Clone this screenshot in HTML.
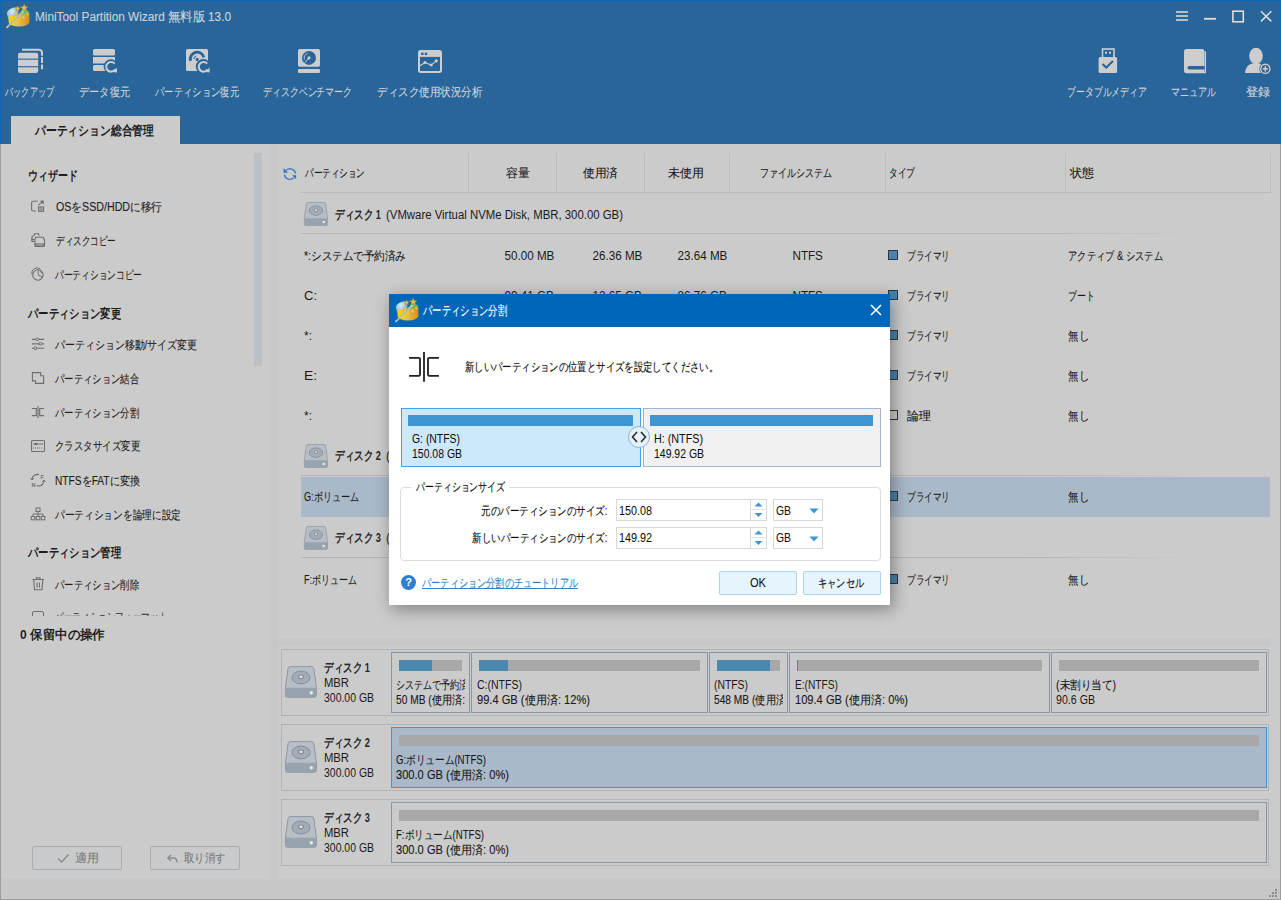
<!DOCTYPE html>
<html><head><meta charset="utf-8">
<style>
*{box-sizing:border-box}
html,body{margin:0;padding:0}
body{width:1281px;height:900px;overflow:hidden;position:relative;background:#cbcbcb;font-family:"Liberation Sans",sans-serif;font-size:12px;color:#262626}
.a{position:absolute}
svg{position:absolute;overflow:visible}

.tx{position:absolute;white-space:nowrap;line-height:20px;height:20px}
.ts{display:inline-block}
</style></head>
<body>
<div class="a" style="left:0px;top:0px;width:1281px;height:144px;background:#28659a;"></div>
<div class="a" style="left:0px;top:0px;width:1281px;height:1px;background:#0a67bd;"></div>
<div class="a" style="left:0px;top:0px;width:1px;height:144px;background:#0a67bd;"></div>
<div class="a" style="left:1280px;top:0px;width:1px;height:144px;background:#0a67bd;"></div>
<div class="a" style="left:0px;top:144px;width:1px;height:756px;background:#9c9c9c;"></div>
<div class="a" style="left:1280px;top:144px;width:1px;height:756px;background:#9c9c9c;"></div>
<div class="a" style="left:0px;top:899px;width:1281px;height:1px;background:#9c9c9c;"></div>
<svg style="left:6px;top:4px" width="24" height="24" viewBox="0 0 24 24">
<defs><linearGradient id="gy6" x1="0" x2="1"><stop offset="0" stop-color="#f0d800"/><stop offset="0.45" stop-color="#e4c448"/><stop offset="1" stop-color="#dc8c14"/></linearGradient>
<radialGradient id="gb6" cx="0.45" cy="0.35" r="0.75"><stop offset="0" stop-color="#d8eaf6"/><stop offset="0.55" stop-color="#9cc8e6"/><stop offset="1" stop-color="#1a80cc"/></radialGradient></defs>
<path d="M0.8 9.5 A11 7 0 0 1 12 3 L12.5 11 L2.5 16 Z" fill="url(#gb6)"/>
<path d="M2.6 11.5 L12.5 10.5 L23.4 9.5 V18 A10.4 4.6 0 0 1 2.6 18 Z" fill="url(#gy6)"/>
<path d="M12.5 10.2 L23.4 9.6 A9 4.5 0 0 0 17 5.2 Z" fill="#66c454"/>
<polygon points="18.20,-0.20 19.28,2.41 22.10,2.63 19.95,4.47 20.61,7.22 18.20,5.75 15.79,7.22 16.45,4.47 14.30,2.63 17.12,2.41" fill="#d9bf55" stroke="#9a7a28" stroke-width="0.45"/><polygon points="11.70,1.70 12.47,3.54 14.46,3.70 12.94,5.00 13.40,6.95 11.70,5.90 10.00,6.95 10.46,5.00 8.94,3.70 10.93,3.54" fill="#d9bf55" stroke="#9a7a28" stroke-width="0.45"/><polygon points="10.00,7.90 10.61,9.36 12.19,9.49 10.98,10.52 11.35,12.06 10.00,11.23 8.65,12.06 9.02,10.52 7.81,9.49 9.39,9.36" fill="#e0cc66" stroke="#b09040" stroke-width="0.3"/><polygon points="17.40,10.80 18.09,12.45 19.87,12.60 18.51,13.76 18.93,15.50 17.40,14.57 15.87,15.50 16.29,13.76 14.93,12.60 16.71,12.45" fill="#e6d070" stroke="#b09040" stroke-width="0.3"/><polygon points="21.20,8.30 21.73,9.57 23.10,9.68 22.06,10.58 22.38,11.92 21.20,11.20 20.02,11.92 20.34,10.58 19.30,9.68 20.67,9.57" fill="#e6d070" stroke="#b09040" stroke-width="0.3"/>
<line x1="1" y1="23.4" x2="17" y2="7.6" stroke="#dcdcdc" stroke-width="1.6" stroke-linecap="round"/>
<line x1="1.4" y1="23" x2="16.6" y2="8" stroke="#606060" stroke-width="0.6"/>
</svg>
<svg style="left:17px;top:48px" width="26" height="26" viewBox="0 0 26 26">
<path d="M5 1.7 H22 a3 3 0 0 1 3 3 V21.2" fill="none" stroke="#cdcdcd" stroke-width="2" stroke-dasharray="24.6 1.3 6 1.5 10"/>
<rect x="1" y="4.8" width="20.2" height="20.2" rx="2" fill="#cdcdcd"/>
<rect x="1" y="10.6" width="20.2" height="1.1" fill="#28659a"/>
<rect x="1" y="18.2" width="20.2" height="1.1" fill="#28659a"/>
</svg>
<svg style="left:92px;top:48px" width="26" height="26" viewBox="0 0 26 26">
<rect x="1" y="1" width="22" height="6.6" rx="1.6" fill="#cdcdcd"/>
<rect x="1" y="9" width="22" height="6.5" fill="#cdcdcd"/>
<rect x="1" y="17" width="22" height="6" rx="1.6" fill="#cdcdcd"/>
<circle cx="18.8" cy="18.5" r="7.2" fill="#28659a"/>
<path d="M22.6 15.7 A4.8 4.8 0 1 0 23 21.5" fill="none" stroke="#cdcdcd" stroke-width="2"/>
<path d="M25 19.5 L25 24.5 L20.5 24 Z" fill="#cdcdcd"/>
</svg>
<svg style="left:185px;top:48px" width="26" height="26" viewBox="0 0 26 26">
<rect x="1" y="1" width="22" height="22" rx="1.6" fill="#cdcdcd"/>
<path d="M5.5 12.8 A6.8 6.8 0 0 1 18.9 9.4" fill="none" stroke="#28659a" stroke-width="2.8"/>
<path d="M8.8 11 A3.6 3.6 0 0 1 11 7.9" fill="none" stroke="#28659a" stroke-width="1.1"/>
<circle cx="12.2" cy="11.4" r="1.6" fill="#28659a"/>
<circle cx="18.3" cy="18.5" r="7.5" fill="#28659a"/>
<path d="M22.2 15.7 A4.8 4.8 0 1 0 22.6 21.5" fill="none" stroke="#cdcdcd" stroke-width="2"/>
<path d="M24.6 19.5 L24.6 24.5 L20.1 24 Z" fill="#cdcdcd"/>
</svg>
<svg style="left:298px;top:48px" width="24" height="26" viewBox="0 0 24 26">
<rect x="0" y="1" width="22" height="17.7" rx="1.6" fill="#cdcdcd"/>
<circle cx="11" cy="9.9" r="7" fill="#28659a"/>
<path d="M6.4 11.5 A5 5 0 0 1 9.5 5.25" fill="none" stroke="#cdcdcd" stroke-width="0.9"/>
<circle cx="11" cy="9.9" r="1.6" fill="#cdcdcd"/>
<line x1="11" y1="9.9" x2="7" y2="14.6" stroke="#cdcdcd" stroke-width="1"/>
<rect x="0" y="21" width="22" height="4" rx="1" fill="#cdcdcd"/>
</svg>
<svg style="left:418px;top:49px" width="26" height="24" viewBox="0 0 26 24">
<rect x="1" y="1.9" width="22" height="21" rx="1.6" fill="none" stroke="#cdcdcd" stroke-width="2"/>
<rect x="1" y="1.9" width="22" height="6" fill="#cdcdcd"/>
<rect x="3.2" y="3.6" width="2.4" height="2.4" fill="#28659a"/>
<rect x="6.8" y="3.6" width="2.4" height="2.4" fill="#28659a"/>
<polyline points="2,16.8 7,13.6 13.2,16.1 18.3,11.8" fill="none" stroke="#cdcdcd" stroke-width="1.1"/>
<circle cx="7" cy="13.6" r="1.5" fill="#cdcdcd"/><circle cx="13.2" cy="16.1" r="1.5" fill="#cdcdcd"/><circle cx="18.3" cy="11.8" r="1.6" fill="#cdcdcd"/>
</svg>
<svg style="left:1098px;top:48px" width="20" height="26" viewBox="0 0 20 26">
<rect x="4.5" y="1" width="11.5" height="9" fill="none" stroke="#cdcdcd" stroke-width="1.6"/>
<rect x="7" y="3.7" width="2" height="2" fill="#cdcdcd"/><rect x="11" y="3.7" width="2" height="2" fill="#cdcdcd"/>
<rect x="0.6" y="9" width="18.5" height="16" rx="1.5" fill="#cdcdcd"/>
<polyline points="4.5,16 8.3,19.5 15,13" fill="none" stroke="#28659a" stroke-width="2"/>
</svg>
<svg style="left:1183px;top:48px" width="24" height="26" viewBox="0 0 24 26">
<rect x="1" y="1" width="20.5" height="24" rx="2.6" fill="#cdcdcd"/>
<rect x="4.5" y="18" width="18" height="3.4" rx="1.7" fill="#28659a"/>
<path d="M22.4 3.5 V24.6 H3" fill="none" stroke="#cdcdcd" stroke-width="1.3"/>
</svg>
<svg style="left:1245px;top:47px" width="27" height="28" viewBox="0 0 27 28">
<ellipse cx="11" cy="9" rx="6.8" ry="8.3" fill="#cdcdcd"/>
<path d="M0 26 C0.5 19.5 4.5 16 10.5 16 C14.5 16 18 17.5 19.5 20 L19 26 Z" fill="#cdcdcd"/>
<circle cx="20.3" cy="21.8" r="6" fill="#28659a"/>
<circle cx="20.3" cy="21.8" r="4.6" fill="none" stroke="#cdcdcd" stroke-width="1.4"/>
<path d="M20.3 19.2 V24.4 M17.7 21.8 H22.9" stroke="#cdcdcd" stroke-width="1.6"/>
</svg>
<svg style="left:1175px;top:10px" width="100" height="14" viewBox="0 0 100 14">
<path d="M1 2 H13 M1 6 H13 M1 10 H13" stroke="#e2ddd8" stroke-width="1.6"/>
<path d="M29 8.8 H41" stroke="#e2ddd8" stroke-width="1.8"/>
<rect x="57.9" y="1.2" width="10.4" height="10.6" fill="none" stroke="#e2ddd8" stroke-width="1.6"/>
<path d="M86 1.3 L96.3 11.4 M96.3 1.3 L86 11.4" stroke="#e2ddd8" stroke-width="1.5"/>
</svg>
<div class="a" style="left:11px;top:116px;width:169px;height:28px;background:#cbcbcb;"></div>
<div class="a" style="left:1px;top:879px;width:1279px;height:20px;background:#c7c7c7;"></div>
<div class="a" style="left:32px;top:846px;width:90px;height:24px;border:1px solid #abadb0;border-radius:2px;background:#c9cacc"></div>
<div class="a" style="left:150px;top:846px;width:90px;height:24px;border:1px solid #abadb0;border-radius:2px;background:#c9cacc"></div>
<svg style="left:30px;top:200px" width="16" height="14" viewBox="0 0 16 14">
<path d="M7.7 1.2 H3.2 a1.6 1.6 0 0 0 -1.6 1.6 V9.4 a1.6 1.6 0 0 0 1.6 1.6 H5.9" fill="none" stroke="#6e6e6e" stroke-width="1.1"/>
<path d="M8.4 5.2 L12.6 1.6" stroke="#6e6e6e" stroke-width="1.1"/>
<polygon points="10,0.8 13.8,0.6 13.6,4.4" fill="#6e6e6e"/>
<rect x="8.6" y="6.9" width="4.9" height="4.4" fill="none" stroke="#6e6e6e" stroke-width="1.1"/>
<path d="M11 7 V11.2 M8.6 9.1 H13.5" stroke="#6e6e6e" stroke-width="0.7"/>
</svg>
<svg style="left:30px;top:232px" width="16" height="16" viewBox="0 0 16 16">
<path d="M3.6 4.2 V4 L4.6 1.7 H8.6 L9.3 3.6 M1.8 9.4 V5.8 L2.6 3.8" fill="none" stroke="#6e6e6e" stroke-width="1.1"/>
<path d="M1.8 9.4 H4.2 M1.8 7.4 H4.2" fill="none" stroke="#6e6e6e" stroke-width="1.1"/>
<path d="M5.5 5.2 H13.2 L14.5 8.2 V13.6 a0.9 0.9 0 0 1 -0.9 0.9 H5.8 a0.9 0.9 0 0 1 -0.9 -0.9 V8.2 Z" fill="none" stroke="#6e6e6e" stroke-width="1.1"/>
<rect x="5" y="11.3" width="9.4" height="3.2" fill="#6e6e6e" opacity="0.8"/>
<path d="M6.5 12.9 H13" stroke="#cbcbcb" stroke-width="0.6"/>
</svg>
<svg style="left:30px;top:266px" width="16" height="16" viewBox="0 0 16 16">
<path d="M1.8 8.2 A5.3 5.3 0 0 1 10.5 3.2" fill="none" stroke="#6e6e6e" stroke-width="1"/>
<circle cx="7.9" cy="9" r="5.2" fill="#cbcbcb" stroke="#6e6e6e" stroke-width="1.1"/>
<path d="M8.2 3.9 V9 L12.6 11.2" fill="none" stroke="#6e6e6e" stroke-width="1"/>
<path d="M10.2 5.5 L12.8 8" stroke="#6e6e6e" stroke-width="0.9"/>
</svg>
<svg style="left:31px;top:337px" width="15" height="14" viewBox="0 0 15 14">
<path d="M0.9 2.4 H13.1 M0.9 11.2 H13.1" stroke="#6e6e6e" stroke-width="1.1"/>
<path d="M0.9 6.8 H13.1" stroke="#6e6e6e" stroke-width="1.6" opacity="0.75"/>
<circle cx="6.3" cy="2.4" r="1.4" fill="#cbcbcb" stroke="#6e6e6e" stroke-width="1"/>
<circle cx="9.5" cy="6.8" r="1.4" fill="#cbcbcb" stroke="#6e6e6e" stroke-width="1"/>
<circle cx="4.3" cy="11.2" r="1.4" fill="#cbcbcb" stroke="#6e6e6e" stroke-width="1"/>
</svg>
<svg style="left:31px;top:372px" width="15" height="14" viewBox="0 0 15 14">
<path d="M1.4 0.6 H9.7 V3.7 H12.6 V11.4 H4.5 V8.9 H1.4 Z" fill="none" stroke="#6e6e6e" stroke-width="1.1"/>
</svg>
<svg style="left:31px;top:407px" width="15" height="13" viewBox="0 0 15 13">
<path d="M0.9 1.5 H5.3 V8.6 H0.9 M13.1 1.5 H8.7 V8.6 H13.1" fill="none" stroke="#6e6e6e" stroke-width="1.1"/>
<path d="M7 -0.7 V11" stroke="#6e6e6e" stroke-width="1.6" opacity="0.7"/>
</svg>
<svg style="left:30px;top:439px" width="16" height="14" viewBox="0 0 16 14">
<rect x="1.5" y="1.5" width="13" height="11" rx="1" fill="none" stroke="#6e6e6e" stroke-width="1.1"/>
<path d="M3 5 H13" stroke="#6e6e6e" stroke-width="1"/>
<circle cx="6" cy="5" r="1.3" fill="#6e6e6e"/>
<path d="M3 9 H13" stroke="#6e6e6e" stroke-width="1" stroke-dasharray="1 1"/>
</svg>
<svg style="left:30px;top:473px" width="16" height="14" viewBox="0 0 16 14">
<path d="M2 6 A5.5 5.5 0 0 1 9 1.6" fill="none" stroke="#6e6e6e" stroke-width="1.1"/>
<path d="M14 8 A5.5 5.5 0 0 1 6.5 12.6" fill="none" stroke="#6e6e6e" stroke-width="1.1"/>
<path d="M0.5 5 L2 7 L3.8 5.2" fill="none" stroke="#6e6e6e" stroke-width="1"/>
<path d="M12.2 8.8 L14 7 L15.5 9" fill="none" stroke="#6e6e6e" stroke-width="1"/>
<text x="10.5" y="6" font-size="5.5" font-family="Liberation Sans" font-weight="bold" fill="#6e6e6e">F</text>
<text x="1.5" y="13.5" font-size="5.5" font-family="Liberation Sans" font-weight="bold" fill="#6e6e6e">N</text>
</svg>
<svg style="left:30px;top:507px" width="16" height="14" viewBox="0 0 16 14">
<rect x="6" y="1" width="4" height="3.5" fill="none" stroke="#6e6e6e" stroke-width="1"/>
<path d="M8 4.5 V7 M3 9 V7 H13 V9 M8 7 V9" fill="none" stroke="#6e6e6e" stroke-width="1"/>
<rect x="1.2" y="9.5" width="3.6" height="3.3" fill="none" stroke="#6e6e6e" stroke-width="1"/>
<rect x="6.2" y="9.5" width="3.6" height="3.3" fill="none" stroke="#6e6e6e" stroke-width="1"/>
<rect x="11.2" y="9.5" width="3.6" height="3.3" fill="none" stroke="#6e6e6e" stroke-width="1"/>
</svg>
<svg style="left:32px;top:577px" width="13" height="14" viewBox="0 0 13 14">
<path d="M0.5 2.5 H12 M4.5 2.5 V0.8 H8 V2.5" fill="none" stroke="#6e6e6e" stroke-width="1.1"/>
<path d="M1.8 3 L2.5 12.8 H10 L10.8 3" fill="none" stroke="#6e6e6e" stroke-width="1.1"/>
<path d="M5 5.5 V10.5 M7.5 5.5 V10.5" stroke="#6e6e6e" stroke-width="1.1"/>
</svg>
<div class="a" style="left:31px;top:609px;width:15px;height:7px;overflow:hidden"><div class="a" style="left:1px;top:2px;width:12px;height:12px;border:1.2px solid #6e6e6e;border-radius:2px"></div></div>
<div class="a" style="left:55px;top:611px;width:120px;height:5px;overflow:hidden;color:#2c2c2c;font-size:12px;line-height:20px;white-space:nowrap"><div style="position:absolute;top:-4px;left:0;transform:scaleX(0.72);transform-origin:left">パーティションフォーマット</div></div>
<svg style="left:57px;top:853px" width="13" height="11" viewBox="0 0 13 11">
<polyline points="1,5.5 4.5,9 11.5,1.5" fill="none" stroke="#8a8a8a" stroke-width="1.3"/></svg>
<svg style="left:166px;top:853px" width="13" height="11" viewBox="0 0 13 11">
<path d="M2 5 H7.5 A3.5 3.5 0 0 1 11 8.5 V9.5" fill="none" stroke="#8a8a8a" stroke-width="1.3"/>
<polyline points="5,2 1.8,5 5,8" fill="none" stroke="#8a8a8a" stroke-width="1.3"/></svg>
<svg style="left:282px;top:166px" width="16" height="16" viewBox="0 0 16 16">
<path d="M4.3 4.3 A5.6 5.6 0 0 1 13.6 7.6" fill="none" stroke="#3a7fd0" stroke-width="1.4"/>
<path d="M2.4 8.6 A5.6 5.6 0 0 0 11.8 11.8" fill="none" stroke="#3a7fd0" stroke-width="1.4"/>
<polygon points="1.6,2.1 1.6,6.7 5.9,6.7" fill="#2a70c8"/>
<polygon points="10.1,9.3 14.1,9.3 14.1,13.3" fill="#2a70c8"/>
</svg>
<div class="a" style="left:468px;top:153px;width:1px;height:39px;background:#bdbdbd;"></div>
<div class="a" style="left:556px;top:153px;width:1px;height:39px;background:#bdbdbd;"></div>
<div class="a" style="left:644px;top:153px;width:1px;height:39px;background:#bdbdbd;"></div>
<div class="a" style="left:729px;top:153px;width:1px;height:39px;background:#bdbdbd;"></div>
<div class="a" style="left:885px;top:153px;width:1px;height:39px;background:#bdbdbd;"></div>
<div class="a" style="left:1065px;top:153px;width:1px;height:39px;background:#bdbdbd;"></div>
<div class="a" style="left:1270px;top:153px;width:1px;height:39px;background:#bdbdbd;"></div>
<div class="a" style="left:301px;top:192px;width:970px;height:1px;background:#bababa;"></div>
<svg style="left:304px;top:202px" width="24" height="24" viewBox="0 0 32 32">
<path d="M5.5 0.6 H26.3 Q28.6 0.6 28.9 2.8 L31.4 22 V29.3 Q31.4 31.3 29.4 31.3 H2.4 Q0.4 31.3 0.4 29.3 V22 L3 2.8 Q3.3 0.6 5.5 0.6 Z" fill="#b7bec6" stroke="#8e98a3" stroke-width="1"/>
<path d="M0.6 21.8 H31.2 V29.3 Q31.2 31.1 29.4 31.1 H2.4 Q0.6 31.1 0.6 29.3 Z" fill="#97a3af"/>
<ellipse cx="16" cy="11.5" rx="9" ry="6.4" fill="#a2acb6" stroke="#838f9b" stroke-width="1"/>
<ellipse cx="16" cy="10.8" rx="2.4" ry="1.8" fill="#dfe3e7" stroke="#7f8b97" stroke-width="1.2"/>
<circle cx="26.3" cy="26.7" r="1.7" fill="#e6e9ec"/>
</svg>
<svg style="left:304px;top:444px" width="24" height="24" viewBox="0 0 32 32">
<path d="M5.5 0.6 H26.3 Q28.6 0.6 28.9 2.8 L31.4 22 V29.3 Q31.4 31.3 29.4 31.3 H2.4 Q0.4 31.3 0.4 29.3 V22 L3 2.8 Q3.3 0.6 5.5 0.6 Z" fill="#b7bec6" stroke="#8e98a3" stroke-width="1"/>
<path d="M0.6 21.8 H31.2 V29.3 Q31.2 31.1 29.4 31.1 H2.4 Q0.6 31.1 0.6 29.3 Z" fill="#97a3af"/>
<ellipse cx="16" cy="11.5" rx="9" ry="6.4" fill="#a2acb6" stroke="#838f9b" stroke-width="1"/>
<ellipse cx="16" cy="10.8" rx="2.4" ry="1.8" fill="#dfe3e7" stroke="#7f8b97" stroke-width="1.2"/>
<circle cx="26.3" cy="26.7" r="1.7" fill="#e6e9ec"/>
</svg>
<svg style="left:304px;top:526px" width="24" height="24" viewBox="0 0 32 32">
<path d="M5.5 0.6 H26.3 Q28.6 0.6 28.9 2.8 L31.4 22 V29.3 Q31.4 31.3 29.4 31.3 H2.4 Q0.4 31.3 0.4 29.3 V22 L3 2.8 Q3.3 0.6 5.5 0.6 Z" fill="#b7bec6" stroke="#8e98a3" stroke-width="1"/>
<path d="M0.6 21.8 H31.2 V29.3 Q31.2 31.1 29.4 31.1 H2.4 Q0.6 31.1 0.6 29.3 Z" fill="#97a3af"/>
<ellipse cx="16" cy="11.5" rx="9" ry="6.4" fill="#a2acb6" stroke="#838f9b" stroke-width="1"/>
<ellipse cx="16" cy="10.8" rx="2.4" ry="1.8" fill="#dfe3e7" stroke="#7f8b97" stroke-width="1.2"/>
<circle cx="26.3" cy="26.7" r="1.7" fill="#e6e9ec"/>
</svg>
<div class="a" style="left:301px;top:233px;width:900px;height:1px;background:linear-gradient(90deg,#b4b4b4 0%,#b4b4b4 80%,rgba(180,180,180,0) 100%);"></div>
<div class="a" style="left:301px;top:475px;width:900px;height:1px;background:linear-gradient(90deg,#b4b4b4 0%,#b4b4b4 80%,rgba(180,180,180,0) 100%);"></div>
<div class="a" style="left:301px;top:557px;width:900px;height:1px;background:linear-gradient(90deg,#b4b4b4 0%,#b4b4b4 80%,rgba(180,180,180,0) 100%);"></div>
<div class="a" style="left:301px;top:477px;width:969px;height:40px;background:#a9b9c9;"></div>
<div class="a" style="left:888px;top:250px;width:10px;height:10px;border:1px solid #30383f;background:#4a84ae"></div>
<div class="a" style="left:888px;top:290px;width:10px;height:10px;border:1px solid #30383f;background:#4a84ae"></div>
<div class="a" style="left:888px;top:330px;width:10px;height:10px;border:1px solid #30383f;background:#4a84ae"></div>
<div class="a" style="left:888px;top:370px;width:10px;height:10px;border:1px solid #30383f;background:#4a84ae"></div>
<div class="a" style="left:888px;top:410px;width:10px;height:10px;border:1px solid #30383f;background:transparent"></div>
<div class="a" style="left:888px;top:491px;width:10px;height:10px;border:1px solid #30383f;background:#4a84ae"></div>
<div class="a" style="left:888px;top:574px;width:10px;height:10px;border:1px solid #30383f;background:#4a84ae"></div>
<div class="a" style="left:254px;top:153px;width:8px;height:213px;background:#bcc1c5;"></div>
<div class="a" style="left:270px;top:144px;width:8px;height:734px;background:#c7c7c7;"></div>
<div class="a" style="left:279px;top:639px;width:992px;height:7px;background:#c7c7c7;"></div>
<div class="a" style="left:281px;top:649px;width:988px;height:67px;border:1px solid #aeb4ba"></div>
<svg style="left:285px;top:666px" width="32" height="32" viewBox="0 0 32 32">
<path d="M5.5 0.6 H26.3 Q28.6 0.6 28.9 2.8 L31.4 22 V29.3 Q31.4 31.3 29.4 31.3 H2.4 Q0.4 31.3 0.4 29.3 V22 L3 2.8 Q3.3 0.6 5.5 0.6 Z" fill="#b7bec6" stroke="#8e98a3" stroke-width="1"/>
<path d="M0.6 21.8 H31.2 V29.3 Q31.2 31.1 29.4 31.1 H2.4 Q0.6 31.1 0.6 29.3 Z" fill="#97a3af"/>
<ellipse cx="16" cy="11.5" rx="9" ry="6.4" fill="#a2acb6" stroke="#838f9b" stroke-width="1"/>
<ellipse cx="16" cy="10.8" rx="2.4" ry="1.8" fill="#dfe3e7" stroke="#7f8b97" stroke-width="1.2"/>
<circle cx="26.3" cy="26.7" r="1.7" fill="#e6e9ec"/>
</svg>
<div class="a" style="left:281px;top:724px;width:988px;height:67px;border:1px solid #aeb4ba"></div>
<svg style="left:285px;top:741px" width="32" height="32" viewBox="0 0 32 32">
<path d="M5.5 0.6 H26.3 Q28.6 0.6 28.9 2.8 L31.4 22 V29.3 Q31.4 31.3 29.4 31.3 H2.4 Q0.4 31.3 0.4 29.3 V22 L3 2.8 Q3.3 0.6 5.5 0.6 Z" fill="#b7bec6" stroke="#8e98a3" stroke-width="1"/>
<path d="M0.6 21.8 H31.2 V29.3 Q31.2 31.1 29.4 31.1 H2.4 Q0.6 31.1 0.6 29.3 Z" fill="#97a3af"/>
<ellipse cx="16" cy="11.5" rx="9" ry="6.4" fill="#a2acb6" stroke="#838f9b" stroke-width="1"/>
<ellipse cx="16" cy="10.8" rx="2.4" ry="1.8" fill="#dfe3e7" stroke="#7f8b97" stroke-width="1.2"/>
<circle cx="26.3" cy="26.7" r="1.7" fill="#e6e9ec"/>
</svg>
<div class="a" style="left:281px;top:799px;width:988px;height:67px;border:1px solid #aeb4ba"></div>
<svg style="left:285px;top:816px" width="32" height="32" viewBox="0 0 32 32">
<path d="M5.5 0.6 H26.3 Q28.6 0.6 28.9 2.8 L31.4 22 V29.3 Q31.4 31.3 29.4 31.3 H2.4 Q0.4 31.3 0.4 29.3 V22 L3 2.8 Q3.3 0.6 5.5 0.6 Z" fill="#b7bec6" stroke="#8e98a3" stroke-width="1"/>
<path d="M0.6 21.8 H31.2 V29.3 Q31.2 31.1 29.4 31.1 H2.4 Q0.6 31.1 0.6 29.3 Z" fill="#97a3af"/>
<ellipse cx="16" cy="11.5" rx="9" ry="6.4" fill="#a2acb6" stroke="#838f9b" stroke-width="1"/>
<ellipse cx="16" cy="10.8" rx="2.4" ry="1.8" fill="#dfe3e7" stroke="#7f8b97" stroke-width="1.2"/>
<circle cx="26.3" cy="26.7" r="1.7" fill="#e6e9ec"/>
</svg>
<div class="a" style="left:391px;top:652px;width:79px;height:61px;border:1px solid #8896a6;background:transparent"></div>
<div class="a" style="left:399px;top:660px;width:63px;height:11px;background:#a8a8a8;"></div>
<div class="a" style="left:399px;top:660px;width:33px;height:11px;background:#4a88b0;"></div>
<div class="a" style="left:471px;top:652px;width:237px;height:61px;border:1px solid #8896a6;background:transparent"></div>
<div class="a" style="left:479px;top:660px;width:221px;height:11px;background:#a8a8a8;"></div>
<div class="a" style="left:479px;top:660px;width:29px;height:11px;background:#4a88b0;"></div>
<div class="a" style="left:709px;top:652px;width:79px;height:61px;border:1px solid #8896a6;background:transparent"></div>
<div class="a" style="left:717px;top:660px;width:63px;height:11px;background:#a8a8a8;"></div>
<div class="a" style="left:717px;top:660px;width:53px;height:11px;background:#4a88b0;"></div>
<div class="a" style="left:789px;top:652px;width:261px;height:61px;border:1px solid #8896a6;background:transparent"></div>
<div class="a" style="left:797px;top:660px;width:245px;height:11px;background:#a8a8a8;"></div>
<div class="a" style="left:797px;top:660px;width:1px;height:11px;background:#4a88b0;"></div>
<div class="a" style="left:1051px;top:652px;width:216px;height:61px;border:1px solid #8896a6;background:transparent"></div>
<div class="a" style="left:1059px;top:660px;width:200px;height:11px;background:#a8a8a8;"></div>
<div class="a" style="left:391px;top:727px;width:876px;height:61px;border:1px solid #4b90d0;background:#a9b9c9"></div>
<div class="a" style="left:399px;top:735px;width:860px;height:11px;background:#a8a8a8;"></div>
<div class="a" style="left:391px;top:802px;width:876px;height:61px;border:1px solid #8896a6;background:transparent"></div>
<div class="a" style="left:399px;top:810px;width:860px;height:11px;background:#a8a8a8;"></div>
<div class="a" style="left:1275px;top:889px;width:2px;height:2px;background:#8e8e8e;"></div>
<div class="a" style="left:1272px;top:892px;width:2px;height:2px;background:#8e8e8e;"></div>
<div class="a" style="left:1275px;top:892px;width:2px;height:2px;background:#8e8e8e;"></div>
<div class="a" style="left:1269px;top:895px;width:2px;height:2px;background:#8e8e8e;"></div>
<div class="a" style="left:1272px;top:895px;width:2px;height:2px;background:#8e8e8e;"></div>
<div class="a" style="left:1275px;top:895px;width:2px;height:2px;background:#8e8e8e;"></div>
<div class="tx" style="left:34.5px;top:7.0px;font-size:12.5px;font-weight:normal;color:#cfd3d7;-webkit-text-stroke:0.12px #cfd3d7;"><span id="t0" class="ts" style="transform:scaleX(0.9431);transform-origin:left center;">MiniTool Partition Wizard 無料版 13.0</span></div>
<div class="tx" style="left:5.0px;top:81.5px;font-size:12.0px;font-weight:normal;color:#cfd3d7;-webkit-text-stroke:0.12px #cfd3d7;"><span id="t1" class="ts" style="transform:scaleX(0.6806);transform-origin:left center;">バックアップ</span></div>
<div class="tx" style="left:78.6px;top:81.5px;font-size:12.0px;font-weight:normal;color:#cfd3d7;-webkit-text-stroke:0.12px #cfd3d7;"><span id="t2" class="ts" style="transform:scaleX(0.8500);transform-origin:left center;">データ復元</span></div>
<div class="tx" style="left:154.8px;top:81.5px;font-size:12.0px;font-weight:normal;color:#cfd3d7;-webkit-text-stroke:0.12px #cfd3d7;"><span id="t3" class="ts" style="transform:scaleX(0.7778);transform-origin:left center;">パーティション復元</span></div>
<div class="tx" style="left:263.3px;top:81.5px;font-size:12.0px;font-weight:normal;color:#cfd3d7;-webkit-text-stroke:0.12px #cfd3d7;"><span id="t4" class="ts" style="transform:scaleX(0.7417);transform-origin:left center;">ディスクベンチマーク</span></div>
<div class="tx" style="left:376.9px;top:81.5px;font-size:12.0px;font-weight:normal;color:#cfd3d7;-webkit-text-stroke:0.12px #cfd3d7;"><span id="t5" class="ts" style="transform:scaleX(0.8750);transform-origin:left center;">ディスク使用状況分析</span></div>
<div class="tx" style="left:1067.3px;top:81.5px;font-size:12.0px;font-weight:normal;color:#cfd3d7;-webkit-text-stroke:0.12px #cfd3d7;"><span id="t6" class="ts" style="transform:scaleX(0.7407);transform-origin:left center;">ブータブルメディア</span></div>
<div class="tx" style="left:1171.3px;top:81.5px;font-size:12.0px;font-weight:normal;color:#cfd3d7;-webkit-text-stroke:0.12px #cfd3d7;"><span id="t7" class="ts" style="transform:scaleX(0.7500);transform-origin:left center;">マニュアル</span></div>
<div class="tx" style="left:1245.6px;top:81.5px;font-size:12.0px;font-weight:normal;color:#cfd3d7;-webkit-text-stroke:0.12px #cfd3d7;"><span id="t8" class="ts" style="transform:scaleX(1.0000);transform-origin:left center;">登録</span></div>
<div class="tx" style="left:35.0px;top:120.5px;font-size:12.5px;font-weight:bold;color:#1e1e1e;"><span id="t9" class="ts" style="transform:scaleX(0.8322);transform-origin:left center;">パーティション総合管理</span></div>
<div class="tx" style="left:27.5px;top:166.0px;font-size:12.5px;font-weight:bold;color:#1f1f1f;"><span id="t10" class="ts" style="transform:scaleX(0.7692);transform-origin:left center;">ウィザード</span></div>
<div class="tx" style="left:55.6px;top:196.6px;font-size:12.0px;font-weight:normal;color:#1f1f1f;-webkit-text-stroke:0.12px #1f1f1f;"><span id="t11" class="ts" style="transform:scaleX(0.8882);transform-origin:left center;">OSをSSD/HDDに移行</span></div>
<div class="tx" style="left:55.6px;top:231.2px;font-size:12.0px;font-weight:normal;color:#1f1f1f;-webkit-text-stroke:0.12px #1f1f1f;"><span id="t12" class="ts" style="transform:scaleX(0.7143);transform-origin:left center;">ディスクコピー</span></div>
<div class="tx" style="left:55.3px;top:264.8px;font-size:12.0px;font-weight:normal;color:#1f1f1f;-webkit-text-stroke:0.12px #1f1f1f;"><span id="t13" class="ts" style="transform:scaleX(0.7250);transform-origin:left center;">パーティションコピー</span></div>
<div class="tx" style="left:28.1px;top:304.0px;font-size:12.5px;font-weight:bold;color:#1f1f1f;"><span id="t14" class="ts" style="transform:scaleX(0.7949);transform-origin:left center;">パーティション変更</span></div>
<div class="tx" style="left:55.3px;top:334.5px;font-size:12.0px;font-weight:normal;color:#1f1f1f;-webkit-text-stroke:0.12px #1f1f1f;"><span id="t15" class="ts" style="transform:scaleX(0.8287);transform-origin:left center;">パーティション移動/サイズ変更</span></div>
<div class="tx" style="left:55.3px;top:368.8px;font-size:12.0px;font-weight:normal;color:#1f1f1f;-webkit-text-stroke:0.12px #1f1f1f;"><span id="t16" class="ts" style="transform:scaleX(0.7778);transform-origin:left center;">パーティション結合</span></div>
<div class="tx" style="left:55.3px;top:403.2px;font-size:12.0px;font-weight:normal;color:#1f1f1f;-webkit-text-stroke:0.12px #1f1f1f;"><span id="t17" class="ts" style="transform:scaleX(0.7778);transform-origin:left center;">パーティション分割</span></div>
<div class="tx" style="left:55.3px;top:436.4px;font-size:12.0px;font-weight:normal;color:#1f1f1f;-webkit-text-stroke:0.12px #1f1f1f;"><span id="t18" class="ts" style="transform:scaleX(0.7870);transform-origin:left center;">クラスタサイズ変更</span></div>
<div class="tx" style="left:55.3px;top:470.7px;font-size:12.0px;font-weight:normal;color:#1f1f1f;-webkit-text-stroke:0.12px #1f1f1f;"><span id="t19" class="ts" style="transform:scaleX(0.8462);transform-origin:left center;">NTFSをFATに変換</span></div>
<div class="tx" style="left:55.3px;top:505.0px;font-size:12.0px;font-weight:normal;color:#1f1f1f;-webkit-text-stroke:0.12px #1f1f1f;"><span id="t20" class="ts" style="transform:scaleX(0.8077);transform-origin:left center;">パーティションを論理に設定</span></div>
<div class="tx" style="left:28.0px;top:543.3px;font-size:12.5px;font-weight:bold;color:#1f1f1f;"><span id="t21" class="ts" style="transform:scaleX(0.7949);transform-origin:left center;">パーティション管理</span></div>
<div class="tx" style="left:55.3px;top:575.0px;font-size:12.0px;font-weight:normal;color:#1f1f1f;-webkit-text-stroke:0.12px #1f1f1f;"><span id="t22" class="ts" style="transform:scaleX(0.7778);transform-origin:left center;">パーティション削除</span></div>
<div class="tx" style="left:20.1px;top:624.5px;font-size:12.5px;font-weight:bold;color:#1f1f1f;"><span id="t23" class="ts" style="transform:scaleX(0.9611);transform-origin:left center;">0 保留中の操作</span></div>
<div class="tx" style="left:74.6px;top:848.2px;font-size:12.0px;font-weight:normal;color:#7a7a7a;-webkit-text-stroke:0.12px #7a7a7a;"><span id="t24" class="ts" style="transform:scaleX(1.0000);transform-origin:left center;">適用</span></div>
<div class="tx" style="left:184.0px;top:848.2px;font-size:12.0px;font-weight:normal;color:#7a7a7a;-webkit-text-stroke:0.12px #7a7a7a;"><span id="t25" class="ts" style="transform:scaleX(0.8542);transform-origin:left center;">取り消す</span></div>
<div class="tx" style="left:304.7px;top:162.5px;font-size:12.0px;font-weight:normal;color:#1a1a1a;-webkit-text-stroke:0.12px #1a1a1a;"><span id="t26" class="ts" style="transform:scaleX(0.7143);transform-origin:left center;">パーティション</span></div>
<div class="tx" style="left:506.2px;top:162.5px;font-size:12.0px;font-weight:normal;color:#1a1a1a;-webkit-text-stroke:0.12px #1a1a1a;"><span id="t27" class="ts" style="transform:scaleX(1.0000);transform-origin:left center;">容量</span></div>
<div class="tx" style="left:583.0px;top:162.5px;font-size:12.0px;font-weight:normal;color:#1a1a1a;-webkit-text-stroke:0.12px #1a1a1a;"><span id="t28" class="ts" style="transform:scaleX(0.9722);transform-origin:left center;">使用済</span></div>
<div class="tx" style="left:668.0px;top:162.5px;font-size:12.0px;font-weight:normal;color:#1a1a1a;-webkit-text-stroke:0.12px #1a1a1a;"><span id="t29" class="ts" style="transform:scaleX(1.0000);transform-origin:left center;">未使用</span></div>
<div class="tx" style="left:759.6px;top:162.5px;font-size:12.0px;font-weight:normal;color:#1a1a1a;-webkit-text-stroke:0.12px #1a1a1a;"><span id="t30" class="ts" style="transform:scaleX(0.7500);transform-origin:left center;">ファイルシステム</span></div>
<div class="tx" style="left:889.0px;top:162.5px;font-size:12.0px;font-weight:normal;color:#1a1a1a;-webkit-text-stroke:0.12px #1a1a1a;"><span id="t31" class="ts" style="transform:scaleX(0.7222);transform-origin:left center;">タイプ</span></div>
<div class="tx" style="left:1069.5px;top:162.5px;font-size:12.0px;font-weight:normal;color:#1a1a1a;-webkit-text-stroke:0.12px #1a1a1a;"><span id="t32" class="ts" style="transform:scaleX(1.0000);transform-origin:left center;">状態</span></div>
<div class="tx" style="left:334.8px;top:205.0px;font-size:12.5px;font-weight:bold;color:#262626;"><span id="t33" class="ts" style="transform:scaleX(0.7367);transform-origin:left center;">ディスク 1</span></div>
<div class="tx" style="left:386.2px;top:205.0px;font-size:12.0px;font-weight:normal;color:#1a1a1a;"><span id="t34" class="ts" style="transform:scaleX(0.9485);transform-origin:left center;">(VMware Virtual NVMe Disk, MBR, 300.00 GB)</span></div>
<div class="tx" style="left:334.8px;top:446.0px;font-size:12.5px;font-weight:bold;color:#262626;"><span id="t35" class="ts" style="transform:scaleX(0.7367);transform-origin:left center;">ディスク 2</span></div>
<div class="tx" style="left:386.2px;top:446.0px;font-size:12.0px;font-weight:normal;color:#1a1a1a;"><span id="t36" class="ts" style="transform:scaleX(0.9485);transform-origin:left center;">(VMware Virtual NVMe Disk, MBR, 300.00 GB)</span></div>
<div class="tx" style="left:334.8px;top:528.0px;font-size:12.5px;font-weight:bold;color:#262626;"><span id="t37" class="ts" style="transform:scaleX(0.7367);transform-origin:left center;">ディスク 3</span></div>
<div class="tx" style="left:386.2px;top:528.0px;font-size:12.0px;font-weight:normal;color:#1a1a1a;"><span id="t38" class="ts" style="transform:scaleX(0.9485);transform-origin:left center;">(VMware Virtual NVMe Disk, MBR, 300.00 GB)</span></div>
<div class="tx" style="left:304.0px;top:246.0px;font-size:12.0px;font-weight:normal;color:#1a1a1a;-webkit-text-stroke:0.12px #1a1a1a;"><span id="t39" class="ts" style="transform:scaleX(0.8792);transform-origin:left center;">*:システムで予約済み</span></div>
<div class="tx" style="right:727.0px;top:246.0px;font-size:12.0px;font-weight:normal;color:#1a1a1a;"><span id="t40" class="ts" style="transform:scaleX(0.9700);transform-origin:right center;">50.00 MB</span></div>
<div class="tx" style="right:639.0px;top:246.0px;font-size:12.0px;font-weight:normal;color:#1a1a1a;"><span id="t41" class="ts" style="transform:scaleX(0.9700);transform-origin:right center;">26.36 MB</span></div>
<div class="tx" style="right:554.0px;top:246.0px;font-size:12.0px;font-weight:normal;color:#1a1a1a;"><span id="t42" class="ts" style="transform:scaleX(0.9700);transform-origin:right center;">23.64 MB</span></div>
<div class="tx" style="left:807.5px;width:0;text-align:center;top:246.0px;font-size:12.0px;font-weight:normal;color:#1a1a1a;"><div style="position:absolute;left:-200px;width:400px;text-align:center"><span id="t43" class="ts" style="transform:scaleX(0.9700);transform-origin:center center;">NTFS</span></div></div>
<div class="tx" style="left:907.0px;top:246.0px;font-size:12.0px;font-weight:normal;color:#1a1a1a;-webkit-text-stroke:0.12px #1a1a1a;"><span id="t44" class="ts" style="transform:scaleX(0.7167);transform-origin:left center;">プライマリ</span></div>
<div class="tx" style="left:1068.3px;top:246.0px;font-size:12.0px;font-weight:normal;color:#1a1a1a;-webkit-text-stroke:0.12px #1a1a1a;"><span id="t45" class="ts" style="transform:scaleX(0.7744);transform-origin:left center;">アクティブ &amp; システム</span></div>
<div class="tx" style="left:304.0px;top:286.0px;font-size:12.0px;font-weight:normal;color:#1a1a1a;"><span id="t46" class="ts" style="transform:scaleX(1.0833);transform-origin:left center;">C:</span></div>
<div class="tx" style="right:727.0px;top:286.0px;font-size:12.0px;font-weight:normal;color:#1a1a1a;"><span id="t47" class="ts" style="transform:scaleX(0.9700);transform-origin:right center;">99.41 GB</span></div>
<div class="tx" style="right:639.0px;top:286.0px;font-size:12.0px;font-weight:normal;color:#1a1a1a;"><span id="t48" class="ts" style="transform:scaleX(0.9700);transform-origin:right center;">12.65 GB</span></div>
<div class="tx" style="right:554.0px;top:286.0px;font-size:12.0px;font-weight:normal;color:#1a1a1a;"><span id="t49" class="ts" style="transform:scaleX(0.9700);transform-origin:right center;">86.76 GB</span></div>
<div class="tx" style="left:807.5px;width:0;text-align:center;top:286.0px;font-size:12.0px;font-weight:normal;color:#1a1a1a;"><div style="position:absolute;left:-200px;width:400px;text-align:center"><span id="t50" class="ts" style="transform:scaleX(0.9700);transform-origin:center center;">NTFS</span></div></div>
<div class="tx" style="left:907.0px;top:286.0px;font-size:12.0px;font-weight:normal;color:#1a1a1a;-webkit-text-stroke:0.12px #1a1a1a;"><span id="t51" class="ts" style="transform:scaleX(0.7167);transform-origin:left center;">プライマリ</span></div>
<div class="tx" style="left:1068.3px;top:286.0px;font-size:12.0px;font-weight:normal;color:#1a1a1a;-webkit-text-stroke:0.12px #1a1a1a;"><span id="t52" class="ts" style="transform:scaleX(0.7500);transform-origin:left center;">ブート</span></div>
<div class="tx" style="left:304.0px;top:326.0px;font-size:12.0px;font-weight:normal;color:#1a1a1a;"><span id="t53" class="ts" style="transform:scaleX(0.9981);transform-origin:left center;">*:</span></div>
<div class="tx" style="right:727.0px;top:326.0px;font-size:12.0px;font-weight:normal;color:#1a1a1a;"><span id="t54" class="ts" style="transform:scaleX(0.9700);transform-origin:right center;">548.00 MB</span></div>
<div class="tx" style="right:639.0px;top:326.0px;font-size:12.0px;font-weight:normal;color:#1a1a1a;"><span id="t55" class="ts" style="transform:scaleX(0.9700);transform-origin:right center;">465.48 MB</span></div>
<div class="tx" style="right:554.0px;top:326.0px;font-size:12.0px;font-weight:normal;color:#1a1a1a;"><span id="t56" class="ts" style="transform:scaleX(0.9700);transform-origin:right center;">82.52 MB</span></div>
<div class="tx" style="left:807.5px;width:0;text-align:center;top:326.0px;font-size:12.0px;font-weight:normal;color:#1a1a1a;"><div style="position:absolute;left:-200px;width:400px;text-align:center"><span id="t57" class="ts" style="transform:scaleX(0.9700);transform-origin:center center;">NTFS</span></div></div>
<div class="tx" style="left:907.0px;top:326.0px;font-size:12.0px;font-weight:normal;color:#1a1a1a;-webkit-text-stroke:0.12px #1a1a1a;"><span id="t58" class="ts" style="transform:scaleX(0.7167);transform-origin:left center;">プライマリ</span></div>
<div class="tx" style="left:1068.3px;top:326.0px;font-size:12.0px;font-weight:normal;color:#1a1a1a;-webkit-text-stroke:0.12px #1a1a1a;"><span id="t59" class="ts" style="transform:scaleX(0.8750);transform-origin:left center;">無し</span></div>
<div class="tx" style="left:304.0px;top:366.0px;font-size:12.0px;font-weight:normal;color:#1a1a1a;"><span id="t60" class="ts" style="transform:scaleX(1.1460);transform-origin:left center;">E:</span></div>
<div class="tx" style="right:727.0px;top:366.0px;font-size:12.0px;font-weight:normal;color:#1a1a1a;"><span id="t61" class="ts" style="transform:scaleX(0.9700);transform-origin:right center;">109.37 GB</span></div>
<div class="tx" style="right:639.0px;top:366.0px;font-size:12.0px;font-weight:normal;color:#1a1a1a;"><span id="t62" class="ts" style="transform:scaleX(0.9700);transform-origin:right center;">58.31 MB</span></div>
<div class="tx" style="right:554.0px;top:366.0px;font-size:12.0px;font-weight:normal;color:#1a1a1a;"><span id="t63" class="ts" style="transform:scaleX(0.9700);transform-origin:right center;">109.32 GB</span></div>
<div class="tx" style="left:807.5px;width:0;text-align:center;top:366.0px;font-size:12.0px;font-weight:normal;color:#1a1a1a;"><div style="position:absolute;left:-200px;width:400px;text-align:center"><span id="t64" class="ts" style="transform:scaleX(0.9700);transform-origin:center center;">NTFS</span></div></div>
<div class="tx" style="left:907.0px;top:366.0px;font-size:12.0px;font-weight:normal;color:#1a1a1a;-webkit-text-stroke:0.12px #1a1a1a;"><span id="t65" class="ts" style="transform:scaleX(0.7167);transform-origin:left center;">プライマリ</span></div>
<div class="tx" style="left:1068.3px;top:366.0px;font-size:12.0px;font-weight:normal;color:#1a1a1a;-webkit-text-stroke:0.12px #1a1a1a;"><span id="t66" class="ts" style="transform:scaleX(0.8750);transform-origin:left center;">無し</span></div>
<div class="tx" style="left:304.0px;top:405.7px;font-size:12.0px;font-weight:normal;color:#1a1a1a;"><span id="t67" class="ts" style="transform:scaleX(0.9981);transform-origin:left center;">*:</span></div>
<div class="tx" style="right:727.0px;top:405.7px;font-size:12.0px;font-weight:normal;color:#1a1a1a;"><span id="t68" class="ts" style="transform:scaleX(0.9700);transform-origin:right center;">90.63 GB</span></div>
<div class="tx" style="right:639.0px;top:405.7px;font-size:12.0px;font-weight:normal;color:#1a1a1a;"><span id="t69" class="ts" style="transform:scaleX(0.9700);transform-origin:right center;">0 B</span></div>
<div class="tx" style="right:554.0px;top:405.7px;font-size:12.0px;font-weight:normal;color:#1a1a1a;"><span id="t70" class="ts" style="transform:scaleX(0.9700);transform-origin:right center;">90.63 GB</span></div>
<div class="tx" style="left:807.5px;width:0;text-align:center;top:405.7px;font-size:12.0px;font-weight:normal;color:#1a1a1a;-webkit-text-stroke:0.12px #1a1a1a;"><div style="position:absolute;left:-200px;width:400px;text-align:center"><span id="t71" class="ts" style="transform:scaleX(0.7500);transform-origin:center center;">未割り当て</span></div></div>
<div class="tx" style="left:907.0px;top:405.7px;font-size:12.0px;font-weight:normal;color:#1a1a1a;-webkit-text-stroke:0.12px #1a1a1a;"><span id="t72" class="ts" style="transform:scaleX(1.0000);transform-origin:left center;">論理</span></div>
<div class="tx" style="left:1068.3px;top:405.7px;font-size:12.0px;font-weight:normal;color:#1a1a1a;-webkit-text-stroke:0.12px #1a1a1a;"><span id="t73" class="ts" style="transform:scaleX(0.8750);transform-origin:left center;">無し</span></div>
<div class="tx" style="left:304.0px;top:487.0px;font-size:12.0px;font-weight:normal;color:#1a1a1a;-webkit-text-stroke:0.12px #1a1a1a;"><span id="t74" class="ts" style="transform:scaleX(0.7568);transform-origin:left center;">G:ボリューム</span></div>
<div class="tx" style="right:727.0px;top:487.0px;font-size:12.0px;font-weight:normal;color:#1a1a1a;"><span id="t75" class="ts" style="transform:scaleX(0.9700);transform-origin:right center;">300.00 GB</span></div>
<div class="tx" style="right:639.0px;top:487.0px;font-size:12.0px;font-weight:normal;color:#1a1a1a;"><span id="t76" class="ts" style="transform:scaleX(0.9700);transform-origin:right center;">104.72 MB</span></div>
<div class="tx" style="right:554.0px;top:487.0px;font-size:12.0px;font-weight:normal;color:#1a1a1a;"><span id="t77" class="ts" style="transform:scaleX(0.9700);transform-origin:right center;">299.90 GB</span></div>
<div class="tx" style="left:807.5px;width:0;text-align:center;top:487.0px;font-size:12.0px;font-weight:normal;color:#1a1a1a;"><div style="position:absolute;left:-200px;width:400px;text-align:center"><span id="t78" class="ts" style="transform:scaleX(0.9700);transform-origin:center center;">NTFS</span></div></div>
<div class="tx" style="left:907.0px;top:487.0px;font-size:12.0px;font-weight:normal;color:#1a1a1a;-webkit-text-stroke:0.12px #1a1a1a;"><span id="t79" class="ts" style="transform:scaleX(0.7167);transform-origin:left center;">プライマリ</span></div>
<div class="tx" style="left:1068.3px;top:487.0px;font-size:12.0px;font-weight:normal;color:#1a1a1a;-webkit-text-stroke:0.12px #1a1a1a;"><span id="t80" class="ts" style="transform:scaleX(0.8750);transform-origin:left center;">無し</span></div>
<div class="tx" style="left:304.0px;top:569.6px;font-size:12.0px;font-weight:normal;color:#1a1a1a;-webkit-text-stroke:0.12px #1a1a1a;"><span id="t81" class="ts" style="transform:scaleX(0.7499);transform-origin:left center;">F:ボリューム</span></div>
<div class="tx" style="right:727.0px;top:569.6px;font-size:12.0px;font-weight:normal;color:#1a1a1a;"><span id="t82" class="ts" style="transform:scaleX(0.9700);transform-origin:right center;">300.00 GB</span></div>
<div class="tx" style="right:639.0px;top:569.6px;font-size:12.0px;font-weight:normal;color:#1a1a1a;"><span id="t83" class="ts" style="transform:scaleX(0.9700);transform-origin:right center;">104.72 MB</span></div>
<div class="tx" style="right:554.0px;top:569.6px;font-size:12.0px;font-weight:normal;color:#1a1a1a;"><span id="t84" class="ts" style="transform:scaleX(0.9700);transform-origin:right center;">299.90 GB</span></div>
<div class="tx" style="left:807.5px;width:0;text-align:center;top:569.6px;font-size:12.0px;font-weight:normal;color:#1a1a1a;"><div style="position:absolute;left:-200px;width:400px;text-align:center"><span id="t85" class="ts" style="transform:scaleX(0.9700);transform-origin:center center;">NTFS</span></div></div>
<div class="tx" style="left:907.0px;top:569.6px;font-size:12.0px;font-weight:normal;color:#1a1a1a;-webkit-text-stroke:0.12px #1a1a1a;"><span id="t86" class="ts" style="transform:scaleX(0.7167);transform-origin:left center;">プライマリ</span></div>
<div class="tx" style="left:1068.3px;top:569.6px;font-size:12.0px;font-weight:normal;color:#1a1a1a;-webkit-text-stroke:0.12px #1a1a1a;"><span id="t87" class="ts" style="transform:scaleX(0.8750);transform-origin:left center;">無し</span></div>
<div class="tx" style="left:422.6px;top:301.0px;font-size:12.5px;font-weight:normal;color:#ffffff;-webkit-text-stroke:0.12px #ffffff;z-index:20;"><span id="t88" class="ts" style="transform:scaleX(0.7179);transform-origin:left center;">パーティション分割</span></div>
<div class="tx" style="left:465.0px;top:357.0px;font-size:12.0px;font-weight:normal;color:#0a0a0a;-webkit-text-stroke:0.12px #0a0a0a;z-index:20;"><span id="t89" class="ts" style="transform:scaleX(0.7809);transform-origin:left center;">新しいパーティションの位置とサイズを設定してください。</span></div>
<div class="tx" style="left:412.4px;top:428.8px;font-size:12.0px;font-weight:normal;color:#0a0a0a;z-index:20;"><span id="t90" class="ts" style="transform:scaleX(0.8676);transform-origin:left center;">G: (NTFS)</span></div>
<div class="tx" style="left:412.4px;top:444.0px;font-size:12.0px;font-weight:normal;color:#0a0a0a;z-index:20;"><span id="t91" class="ts" style="transform:scaleX(0.8715);transform-origin:left center;">150.08 GB</span></div>
<div class="tx" style="left:654.3px;top:428.5px;font-size:12.0px;font-weight:normal;color:#0a0a0a;z-index:20;"><span id="t92" class="ts" style="transform:scaleX(0.8965);transform-origin:left center;">H: (NTFS)</span></div>
<div class="tx" style="left:654.3px;top:444.0px;font-size:12.0px;font-weight:normal;color:#0a0a0a;z-index:20;"><span id="t93" class="ts" style="transform:scaleX(0.8715);transform-origin:left center;">149.92 GB</span></div>
<div class="tx" style="left:416.3px;top:476.6px;font-size:12.0px;font-weight:normal;color:#0a0a0a;-webkit-text-stroke:0.12px #0a0a0a;z-index:20;"><span id="t94" class="ts" style="transform:scaleX(0.7417);transform-origin:left center;">パーティションサイズ</span></div>
<div class="tx" style="right:673.4px;top:501.0px;font-size:12.0px;font-weight:normal;color:#0a0a0a;-webkit-text-stroke:0.12px #0a0a0a;z-index:20;"><span id="t95" class="ts" style="transform:scaleX(0.7907);transform-origin:right center;">元のパーティションのサイズ:</span></div>
<div class="tx" style="right:673.4px;top:528.3px;font-size:12.0px;font-weight:normal;color:#0a0a0a;-webkit-text-stroke:0.12px #0a0a0a;z-index:20;"><span id="t96" class="ts" style="transform:scaleX(0.7879);transform-origin:right center;">新しいパーティションのサイズ:</span></div>
<div class="tx" style="left:619.2px;top:500.6px;font-size:12.0px;font-weight:normal;color:#0a0a0a;z-index:20;"><span id="t97" class="ts" style="transform:scaleX(0.8991);transform-origin:left center;">150.08</span></div>
<div class="tx" style="left:619.2px;top:528.0px;font-size:12.0px;font-weight:normal;color:#0a0a0a;z-index:20;"><span id="t98" class="ts" style="transform:scaleX(0.8991);transform-origin:left center;">149.92</span></div>
<div class="tx" style="left:776.0px;top:500.6px;font-size:12.0px;font-weight:normal;color:#0a0a0a;z-index:20;"><span id="t99" class="ts" style="transform:scaleX(0.8649);transform-origin:left center;">GB</span></div>
<div class="tx" style="left:776.0px;top:528.0px;font-size:12.0px;font-weight:normal;color:#0a0a0a;z-index:20;"><span id="t100" class="ts" style="transform:scaleX(0.8649);transform-origin:left center;">GB</span></div>
<div class="tx" style="left:421.8px;top:573.0px;font-size:12.0px;font-weight:normal;color:#2f7fd0;-webkit-text-stroke:0.12px #2f7fd0;z-index:20;"><span id="t101" class="ts" style="transform:scaleX(0.7647);transform-origin:left center;text-decoration:underline;">パーティション分割のチュートリアル</span></div>
<div class="tx" style="left:750.4px;top:573.0px;font-size:12.0px;font-weight:normal;color:#0a0a0a;z-index:20;"><span id="t102" class="ts" style="transform:scaleX(0.9225);transform-origin:left center;">OK</span></div>
<div class="tx" style="left:817.8px;top:573.0px;font-size:12.0px;font-weight:normal;color:#0a0a0a;-webkit-text-stroke:0.12px #0a0a0a;z-index:20;"><span id="t103" class="ts" style="transform:scaleX(0.7667);transform-origin:left center;">キャンセル</span></div>
<div class="tx" style="left:324.0px;top:657.5px;font-size:12.5px;font-weight:bold;color:#262626;"><span id="t104" class="ts" style="transform:scaleX(0.7367);transform-origin:left center;">ディスク 1</span></div>
<div class="tx" style="left:324.0px;top:672.8px;font-size:12.0px;font-weight:normal;color:#1a1a1a;"><span id="t105" class="ts" style="transform:scaleX(0.9373);transform-origin:left center;">MBR</span></div>
<div class="tx" style="left:324.0px;top:687.5px;font-size:12.0px;font-weight:normal;color:#1a1a1a;"><span id="t106" class="ts" style="transform:scaleX(0.8715);transform-origin:left center;">300.00 GB</span></div>
<div class="tx" style="left:324.0px;top:732.5px;font-size:12.5px;font-weight:bold;color:#262626;"><span id="t107" class="ts" style="transform:scaleX(0.7367);transform-origin:left center;">ディスク 2</span></div>
<div class="tx" style="left:324.0px;top:747.8px;font-size:12.0px;font-weight:normal;color:#1a1a1a;"><span id="t108" class="ts" style="transform:scaleX(0.9373);transform-origin:left center;">MBR</span></div>
<div class="tx" style="left:324.0px;top:762.5px;font-size:12.0px;font-weight:normal;color:#1a1a1a;"><span id="t109" class="ts" style="transform:scaleX(0.8715);transform-origin:left center;">300.00 GB</span></div>
<div class="tx" style="left:324.0px;top:807.5px;font-size:12.5px;font-weight:bold;color:#262626;"><span id="t110" class="ts" style="transform:scaleX(0.7367);transform-origin:left center;">ディスク 3</span></div>
<div class="tx" style="left:324.0px;top:822.8px;font-size:12.0px;font-weight:normal;color:#1a1a1a;"><span id="t111" class="ts" style="transform:scaleX(0.9373);transform-origin:left center;">MBR</span></div>
<div class="tx" style="left:324.0px;top:837.5px;font-size:12.0px;font-weight:normal;color:#1a1a1a;"><span id="t112" class="ts" style="transform:scaleX(0.8715);transform-origin:left center;">300.00 GB</span></div>
<div class="a" style="left:395.6px;top:674.5px;width:69.4px;height:20px;overflow:hidden"><div class="tx" style="left:0;top:0;font-size:12.0px;font-weight:normal;color:#1a1a1a;-webkit-text-stroke:0.12px #1a1a1a;"><span id="t113" class="ts" style="transform:scaleX(0.7500);transform-origin:left center;">システムで予約済み</span></div></div>
<div class="a" style="left:395.6px;top:689.6px;width:69.4px;height:20px;overflow:hidden"><div class="tx" style="left:0;top:0;font-size:12.0px;font-weight:normal;color:#1a1a1a;-webkit-text-stroke:0.12px #1a1a1a;"><span id="t114" class="ts" style="transform:scaleX(0.8500);transform-origin:left center;">50 MB (使用済: 52%)</span></div></div>
<div class="a" style="left:476.5px;top:674.5px;width:228.5px;height:20px;overflow:hidden"><div class="tx" style="left:0;top:0;font-size:12.0px;font-weight:normal;color:#1a1a1a;"><span id="t115" class="ts" style="transform:scaleX(0.8767);transform-origin:left center;">C:(NTFS)</span></div></div>
<div class="a" style="left:476.5px;top:689.6px;width:228.5px;height:20px;overflow:hidden"><div class="tx" style="left:0;top:0;font-size:12.0px;font-weight:normal;color:#1a1a1a;-webkit-text-stroke:0.12px #1a1a1a;"><span id="t116" class="ts" style="transform:scaleX(0.9259);transform-origin:left center;">99.4 GB (使用済: 12%)</span></div></div>
<div class="a" style="left:714.4px;top:674.5px;width:69.1px;height:20px;overflow:hidden"><div class="tx" style="left:0;top:0;font-size:12.0px;font-weight:normal;color:#1a1a1a;"><span id="t117" class="ts" style="transform:scaleX(0.8645);transform-origin:left center;">(NTFS)</span></div></div>
<div class="a" style="left:714.4px;top:689.6px;width:69.1px;height:20px;overflow:hidden"><div class="tx" style="left:0;top:0;font-size:12.0px;font-weight:normal;color:#1a1a1a;-webkit-text-stroke:0.12px #1a1a1a;"><span id="t118" class="ts" style="transform:scaleX(0.8500);transform-origin:left center;">548 MB (使用済: 84%)</span></div></div>
<div class="a" style="left:794.5px;top:674.5px;width:252.5px;height:20px;overflow:hidden"><div class="tx" style="left:0;top:0;font-size:12.0px;font-weight:normal;color:#1a1a1a;"><span id="t119" class="ts" style="transform:scaleX(0.8486);transform-origin:left center;">E:(NTFS)</span></div></div>
<div class="a" style="left:794.5px;top:689.6px;width:252.5px;height:20px;overflow:hidden"><div class="tx" style="left:0;top:0;font-size:12.0px;font-weight:normal;color:#1a1a1a;-webkit-text-stroke:0.12px #1a1a1a;"><span id="t120" class="ts" style="transform:scaleX(0.9259);transform-origin:left center;">109.4 GB (使用済: 0%)</span></div></div>
<div class="a" style="left:1056.3px;top:674.5px;width:207.7px;height:20px;overflow:hidden"><div class="tx" style="left:0;top:0;font-size:12.0px;font-weight:normal;color:#1a1a1a;-webkit-text-stroke:0.12px #1a1a1a;"><span id="t121" class="ts" style="transform:scaleX(0.8824);transform-origin:left center;">(未割り当て)</span></div></div>
<div class="a" style="left:1056.3px;top:689.6px;width:207.7px;height:20px;overflow:hidden"><div class="tx" style="left:0;top:0;font-size:12.0px;font-weight:normal;color:#1a1a1a;"><span id="t122" class="ts" style="transform:scaleX(0.8857);transform-origin:left center;">90.6 GB</span></div></div>
<div class="a" style="left:396.2px;top:749.5px;width:867.8px;height:20px;overflow:hidden"><div class="tx" style="left:0;top:0;font-size:12.0px;font-weight:normal;color:#1a1a1a;-webkit-text-stroke:0.12px #1a1a1a;"><span id="t123" class="ts" style="transform:scaleX(0.8036);transform-origin:left center;">G:ボリューム(NTFS)</span></div></div>
<div class="a" style="left:396.2px;top:764.6px;width:867.8px;height:20px;overflow:hidden"><div class="tx" style="left:0;top:0;font-size:12.0px;font-weight:normal;color:#1a1a1a;-webkit-text-stroke:0.12px #1a1a1a;"><span id="t124" class="ts" style="transform:scaleX(0.9259);transform-origin:left center;">300.0 GB (使用済: 0%)</span></div></div>
<div class="a" style="left:396.2px;top:824.5px;width:867.8px;height:20px;overflow:hidden"><div class="tx" style="left:0;top:0;font-size:12.0px;font-weight:normal;color:#1a1a1a;-webkit-text-stroke:0.12px #1a1a1a;"><span id="t125" class="ts" style="transform:scaleX(0.8000);transform-origin:left center;">F:ボリューム(NTFS)</span></div></div>
<div class="a" style="left:396.2px;top:839.6px;width:867.8px;height:20px;overflow:hidden"><div class="tx" style="left:0;top:0;font-size:12.0px;font-weight:normal;color:#1a1a1a;-webkit-text-stroke:0.12px #1a1a1a;"><span id="t126" class="ts" style="transform:scaleX(0.9259);transform-origin:left center;">300.0 GB (使用済: 0%)</span></div></div>
<div class="a" style="left:389px;top:294px;width:501px;height:311px;background:#fff;box-shadow:3px 4px 16px rgba(0,0,0,0.38);z-index:10;"></div>
<div class="a" style="left:389px;top:294px;width:501px;height:33px;background:#0067b8;z-index:10;"></div>
<div class="a" style="z-index:10;"><svg style="left:395px;top:298px" width="24" height="24" viewBox="0 0 24 24">
<defs><linearGradient id="gy395" x1="0" x2="1"><stop offset="0" stop-color="#f0d800"/><stop offset="0.45" stop-color="#e4c448"/><stop offset="1" stop-color="#dc8c14"/></linearGradient>
<radialGradient id="gb395" cx="0.45" cy="0.35" r="0.75"><stop offset="0" stop-color="#d8eaf6"/><stop offset="0.55" stop-color="#9cc8e6"/><stop offset="1" stop-color="#1a80cc"/></radialGradient></defs>
<path d="M0.8 9.5 A11 7 0 0 1 12 3 L12.5 11 L2.5 16 Z" fill="url(#gb395)"/>
<path d="M2.6 11.5 L12.5 10.5 L23.4 9.5 V18 A10.4 4.6 0 0 1 2.6 18 Z" fill="url(#gy395)"/>
<path d="M12.5 10.2 L23.4 9.6 A9 4.5 0 0 0 17 5.2 Z" fill="#66c454"/>
<polygon points="18.20,-0.20 19.28,2.41 22.10,2.63 19.95,4.47 20.61,7.22 18.20,5.75 15.79,7.22 16.45,4.47 14.30,2.63 17.12,2.41" fill="#d9bf55" stroke="#9a7a28" stroke-width="0.45"/><polygon points="11.70,1.70 12.47,3.54 14.46,3.70 12.94,5.00 13.40,6.95 11.70,5.90 10.00,6.95 10.46,5.00 8.94,3.70 10.93,3.54" fill="#d9bf55" stroke="#9a7a28" stroke-width="0.45"/><polygon points="10.00,7.90 10.61,9.36 12.19,9.49 10.98,10.52 11.35,12.06 10.00,11.23 8.65,12.06 9.02,10.52 7.81,9.49 9.39,9.36" fill="#e0cc66" stroke="#b09040" stroke-width="0.3"/><polygon points="17.40,10.80 18.09,12.45 19.87,12.60 18.51,13.76 18.93,15.50 17.40,14.57 15.87,15.50 16.29,13.76 14.93,12.60 16.71,12.45" fill="#e6d070" stroke="#b09040" stroke-width="0.3"/><polygon points="21.20,8.30 21.73,9.57 23.10,9.68 22.06,10.58 22.38,11.92 21.20,11.20 20.02,11.92 20.34,10.58 19.30,9.68 20.67,9.57" fill="#e6d070" stroke="#b09040" stroke-width="0.3"/>
<line x1="1" y1="23.4" x2="17" y2="7.6" stroke="#dcdcdc" stroke-width="1.6" stroke-linecap="round"/>
<line x1="1.4" y1="23" x2="16.6" y2="8" stroke="#606060" stroke-width="0.6"/>
</svg></div>
<svg style="left:870px;top:304px;z-index:10;" width="12" height="12" viewBox="0 0 12 12">
<path d="M1 1 L11 11 M11 1 L1 11" stroke="#fff" stroke-width="1.6"/></svg>
<svg style="left:408px;top:351px;z-index:10;" width="32" height="32" viewBox="0 0 32 32">
<path d="M1.1 6.9 H10.8 a1.2 1.2 0 0 1 1.2 1.2 V23.7 a1.2 1.2 0 0 1 -1.2 1.2 H1.1" fill="none" stroke="#1e1e1e" stroke-width="1.8"/>
<path d="M30.9 6.9 H21.2 a1.2 1.2 0 0 0 -1.2 1.2 V23.7 a1.2 1.2 0 0 0 1.2 1.2 H30.9" fill="none" stroke="#1e1e1e" stroke-width="1.8"/>
<path d="M16 0.9 V30.7" stroke="#1e1e1e" stroke-width="1.8"/>
</svg>
<div class="a" style="left:401px;top:408px;width:240px;height:59px;background:#cce8fb;border:1px solid #3fa2ee;z-index:10;"></div>
<div class="a" style="left:408px;top:415px;width:225px;height:11px;background:#3d96d4;z-index:10;"></div>
<div class="a" style="left:643px;top:408px;width:238px;height:59px;background:#f0f0f0;border:1px solid #a6b4ca;z-index:10;"></div>
<div class="a" style="left:650px;top:415px;width:223px;height:11px;background:#3d96d4;z-index:10;"></div>
<div class="a" style="left:628px;top:426px;width:22px;height:22px;border-radius:50%;background:#e6f2fa;border:1px solid #8cb6d6;z-index:10;"></div>
<svg style="left:631px;top:431px;z-index:10;" width="16" height="12" viewBox="0 0 16 12">
<polyline points="6,1 1.5,6 6,11" fill="none" stroke="#2a2a2a" stroke-width="1.6"/>
<polyline points="10,1 14.5,6 10,11" fill="none" stroke="#2a2a2a" stroke-width="1.6"/></svg>
<div class="a" style="left:400px;top:487px;width:481px;height:74px;border:1px solid #dcdcdc;border-radius:4px;z-index:10;"></div>
<div class="a" style="left:411px;top:480px;width:98px;height:12px;background:#fff;z-index:10;"></div>
<div class="a" style="left:616px;top:499px;width:151px;height:22px;border:1px solid #d9d9d9;background:#fff;z-index:10;"></div>
<div class="a" style="left:750px;top:499px;width:1px;height:22px;background:#d9d9d9;z-index:10;"></div>
<div class="a" style="left:751px;top:509px;width:15px;height:1px;background:#e4e4e4;z-index:10;"></div>
<svg style="left:754px;top:501px;z-index:10;" width="10" height="18" viewBox="0 0 10 18">
<path d="M0.5 5.5 L4.5 1.5 L8.5 5.5 Z" fill="#3d96d4"/><path d="M0.5 12 L4.5 16 L8.5 12 Z" fill="#3d96d4"/></svg>
<div class="a" style="left:773px;top:499px;width:50px;height:22px;border:1px solid #d9d9d9;background:#fff;z-index:10;"></div>
<svg style="left:809px;top:508px;z-index:10;" width="10" height="6" viewBox="0 0 10 6">
<path d="M0.5 0.5 L9.5 0.5 L5 5.5 Z" fill="#3d96d4"/></svg>
<div class="a" style="left:616px;top:527px;width:151px;height:22px;border:1px solid #d9d9d9;background:#fff;z-index:10;"></div>
<div class="a" style="left:750px;top:527px;width:1px;height:22px;background:#d9d9d9;z-index:10;"></div>
<div class="a" style="left:751px;top:537px;width:15px;height:1px;background:#e4e4e4;z-index:10;"></div>
<svg style="left:754px;top:529px;z-index:10;" width="10" height="18" viewBox="0 0 10 18">
<path d="M0.5 5.5 L4.5 1.5 L8.5 5.5 Z" fill="#3d96d4"/><path d="M0.5 12 L4.5 16 L8.5 12 Z" fill="#3d96d4"/></svg>
<div class="a" style="left:773px;top:527px;width:50px;height:22px;border:1px solid #d9d9d9;background:#fff;z-index:10;"></div>
<svg style="left:809px;top:536px;z-index:10;" width="10" height="6" viewBox="0 0 10 6">
<path d="M0.5 0.5 L9.5 0.5 L5 5.5 Z" fill="#3d96d4"/></svg>
<div class="a" style="left:401px;top:575px;width:15px;height:15px;border-radius:50%;background:#2f7fd0;color:#fff;font-weight:bold;font-size:11px;line-height:15px;text-align:center;z-index:10;">?</div>
<div class="a" style="left:719px;top:571px;width:78px;height:24px;border:1px solid #a9d5f2;border-radius:2px;background:#e6f4fd;z-index:10;"></div>
<div class="a" style="left:803px;top:571px;width:78px;height:24px;border:1px solid #a9d5f2;border-radius:2px;background:#e6f4fd;z-index:10;"></div>
<script>(function(){var W=[196.00,49.00,51.00,84.00,89.00,105.00,80.00,45.00,24.00,119.00,50.00,106.00,60.00,87.00,93.00,142.00,84.00,84.00,85.00,85.00,126.00,93.00,84.00,85.00,24.00,41.00,60.00,24.00,35.00,36.00,72.00,26.00,24.00,46.00,237.00,46.00,237.00,46.00,237.00,102.00,49.83,49.83,49.83,30.40,43.00,95.00,13.00,49.18,49.18,49.18,30.40,43.00,27.00,8.00,56.31,56.31,49.83,30.40,43.00,21.00,13.00,55.65,49.83,55.65,30.40,43.00,21.00,8.00,49.18,17.48,49.18,45.00,24.00,21.00,55.00,55.65,56.31,55.65,30.40,43.00,21.00,53.00,55.65,56.31,55.65,30.40,43.00,21.00,84.00,253.00,48.00,50.00,49.00,50.00,89.00,126.00,135.00,33.00,33.00,15.00,15.00,156.00,16.00,46.00,46.00,25.00,50.00,46.00,25.00,50.00,46.00,25.00,50.00,81.00,95.80,45.00,113.00,34.00,101.47,43.00,113.00,60.00,39.00,90.00,113.00,88.00,113.00];for(var i=0;i<W.length;i++){var e=document.getElementById("t"+i);if(!e||!W[i])continue;var o=e.style.transform;e.style.transform="none";var n=e.getBoundingClientRect().width;if(n>0){e.style.transform="scaleX("+(W[i]/n).toFixed(4)+")";}else{e.style.transform=o;}}})();</script>
</body></html>
